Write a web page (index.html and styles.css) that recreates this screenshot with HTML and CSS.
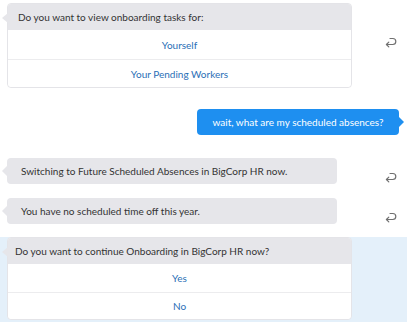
FILE: index.html
```html
<!DOCTYPE html>
<html>
<head>
<meta charset="utf-8">
<link rel="stylesheet" href="styles.css">
</head>
<body>
<div class="chat">
  <div class="row row-first">
    <div class="card">
      <div class="card-head head-a">Do you want to view onboarding tasks for:</div>
      <div class="option opt-a1">Yourself</div>
      <div class="option opt-a2">Your Pending Workers</div>
    </div>
    <span class="reply reply-card"><svg width="12" height="11" viewBox="0 0 12 11"><path d="M5 1.5 H7.8 A3 3 0 0 1 7.8 7.5 H1.4 M3.8 5.1 L1.4 7.5 L3.8 9.9" fill="none" stroke="#707070" stroke-width="1.2" stroke-linecap="round" stroke-linejoin="round"/></svg></span>
  </div>

  <div class="row-user">
    <div class="bubble-user">wait, what are my scheduled absences?</div>
  </div>

  <div class="row row-b1">
    <div class="bubble">Switching to Future Scheduled Absences in BigCorp HR now.</div>
    <span class="reply reply-bubble"><svg width="12" height="11" viewBox="0 0 12 11"><path d="M5 1.5 H7.8 A3 3 0 0 1 7.8 7.5 H1.4 M3.8 5.1 L1.4 7.5 L3.8 9.9" fill="none" stroke="#707070" stroke-width="1.2" stroke-linecap="round" stroke-linejoin="round"/></svg></span>
  </div>

  <div class="row row-b2">
    <div class="bubble">You have no scheduled time off this year.</div>
    <span class="reply reply-bubble"><svg width="12" height="11" viewBox="0 0 12 11"><path d="M5 1.5 H7.8 A3 3 0 0 1 7.8 7.5 H1.4 M3.8 5.1 L1.4 7.5 L3.8 9.9" fill="none" stroke="#707070" stroke-width="1.2" stroke-linecap="round" stroke-linejoin="round"/></svg></span>
  </div>

  <div class="active">
    <div class="card">
      <div class="card-head head-b">Do you want to continue Onboarding in BigCorp HR now?</div>
      <div class="option opt-b1">Yes</div>
      <div class="option opt-b2">No</div>
    </div>
  </div>
</div>
</body>
</html>
```

FILE: styles.css
```css
html, body {
  margin: 0;
  padding: 0;
  background: #ffffff;
}

body {
  font-family: "Lato", "Open Sans", sans-serif;
  font-size: 10px;
  color: #333333;
  width: 407px;
  height: 322px;
  overflow: hidden;
}

.chat {
  display: flex;
  flex-direction: column;
  padding-top: 3px;
}

.row {
  display: flex;
  justify-content: space-between;
  align-items: flex-start;
  padding: 0 10px 0 7px;
}

.card {
  position: relative;
  width: 343px;
  background: #ffffff;
  border: 1px solid #e4e4e8;
  border-radius: 4px;
}

.card::before {
  content: "";
  position: absolute;
  left: -6px;
  top: 9px;
  border-style: solid;
  border-width: 5px 6px 5px 0;
  border-color: transparent #e6e6ea transparent transparent;
}

.card-head {
  background: #e6e6ea;
  border-radius: 3px 3px 0 0;
  height: 26px;
  display: flex;
  align-items: center;
}

.head-a { padding-left: 10px; }
.head-b { padding-left: 7px; }

.option {
  display: flex;
  align-items: center;
  justify-content: center;
  color: #2a6fb6;
  background: #ffffff;
}

.opt-a1 { height: 29px; border-bottom: 1px solid #ececee; }
.opt-a2 { height: 27px; border-radius: 0 0 4px 4px; }
.opt-b1 { height: 28px; border-bottom: 1px solid #ececee; }
.opt-b2 { height: 26px; border-radius: 0 0 4px 4px; }

.reply {
  display: flex;
  width: 12px;
  height: 11px;
}

.reply-card { margin-top: 34px; }
.reply-bubble { margin-top: 14px; }

.row-user {
  display: flex;
  justify-content: flex-end;
  padding-right: 8px;
  margin-top: 21px;
}

.bubble-user {
  position: relative;
  width: 202px;
  height: 26px;
  background: #1e8ff0;
  color: #ffffff;
  border-radius: 4px;
  display: flex;
  align-items: center;
  justify-content: center;
}

.bubble-user::after {
  content: "";
  position: absolute;
  right: -5px;
  top: 8px;
  border-style: solid;
  border-width: 5px 0 5px 5px;
  border-color: transparent transparent transparent #1e8ff0;
}

.row-b1 { margin-top: 23px; }
.row-b2 { margin-top: 14px; }

.bubble {
  position: relative;
  width: 316px;
  height: 26px;
  padding-left: 14px;
  background: #e6e6ea;
  border-radius: 4px;
  display: flex;
  align-items: center;
}

.bubble::before {
  content: "";
  position: absolute;
  left: -5px;
  top: 8px;
  border-style: solid;
  border-width: 5px 5px 5px 0;
  border-color: transparent #e6e6ea transparent transparent;
}

.active {
  margin-top: 13px;
  background: #e4f0fa;
  padding: 0 0 3px 7px;
  flex: 1;
  height: 86px;
}
```
